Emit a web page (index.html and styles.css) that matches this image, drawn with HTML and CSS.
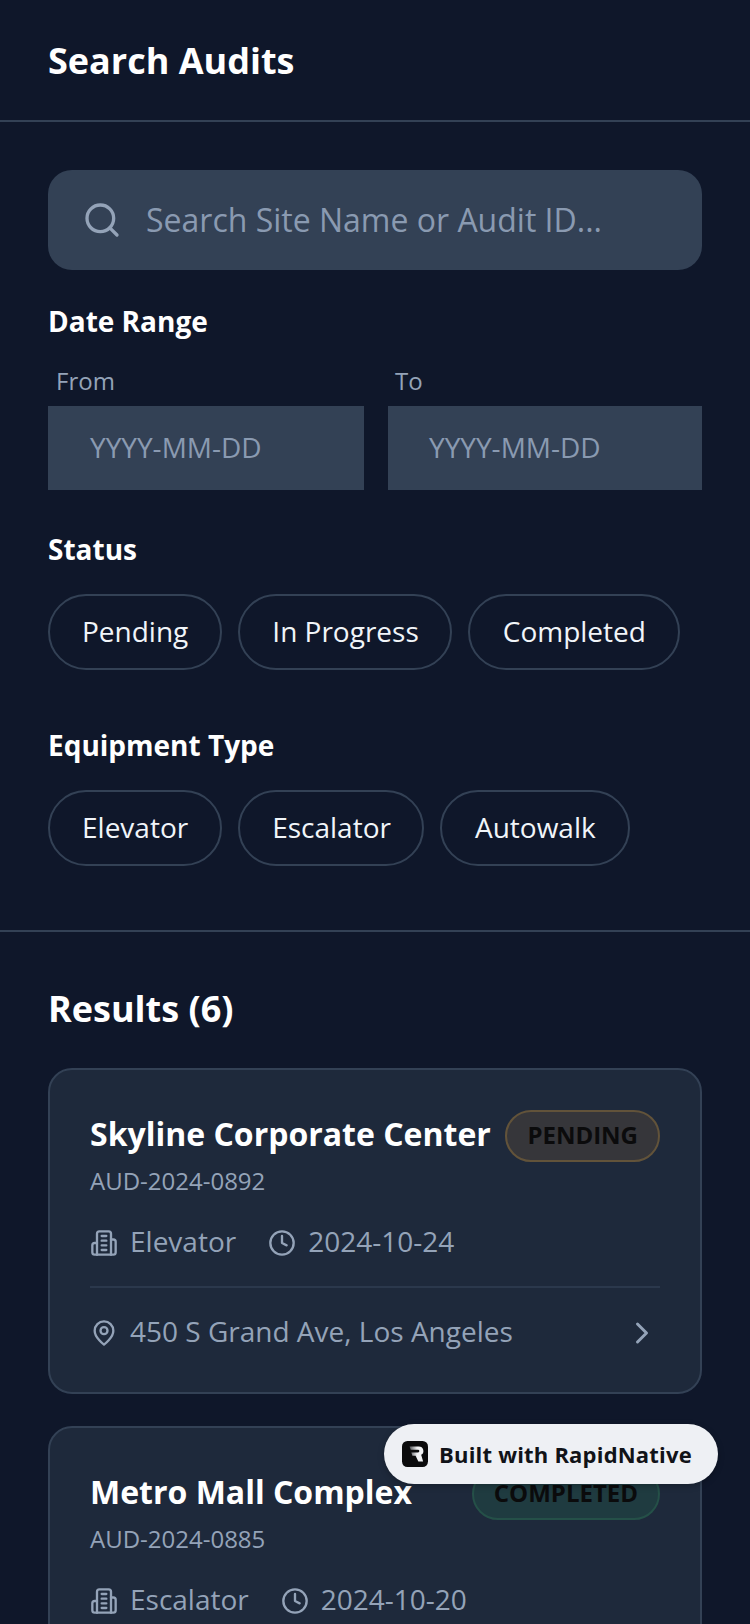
FILE: index.html
```html
<!DOCTYPE html>
<html lang="en">
<head>
  <meta charset="utf-8">
  <title>Search Audits</title>
  <link rel="stylesheet" href="styles.css">
</head>
<body>

<header class="header">
  <h1>Search Audits</h1>
</header>

<section class="filters">
  <div class="searchbox">
    <svg class="search-icon" viewBox="0 0 24 24"><circle cx="11" cy="11" r="8"/><path d="m21 21-4.3-4.3"/></svg>
    <span class="search-text">Search Site Name or Audit ID...</span>
  </div>

  <h3 class="label">Date Range</h3>
  <div class="dates">
    <div class="date from">
      <div class="date-label">From</div>
      <div class="date-input">YYYY-MM-DD</div>
    </div>
    <div class="date to">
      <div class="date-label">To</div>
      <div class="date-input">YYYY-MM-DD</div>
    </div>
  </div>

  <h3 class="label">Status</h3>
  <div class="chips">
    <a class="chip">Pending</a>
    <a class="chip">In Progress</a>
    <a class="chip">Completed</a>
  </div>

  <h3 class="label equipment">Equipment Type</h3>
  <div class="chips">
    <a class="chip">Elevator</a>
    <a class="chip">Escalator</a>
    <a class="chip">Autowalk</a>
  </div>
</section>

<section class="results">
  <h2>Results (6)</h2>

  <div class="card">
    <div class="card-top">
      <div class="card-name">Skyline Corporate Center</div>
      <div class="badge pending">PENDING</div>
    </div>
    <div class="card-id">AUD-2024-0892</div>
    <div class="meta">
      <span class="meta-item">
        <svg class="icon" viewBox="0 0 24 24"><path d="M6 22V4a2 2 0 0 1 2-2h8a2 2 0 0 1 2 2v18Z"/><path d="M6 12H4a2 2 0 0 0-2 2v6a2 2 0 0 0 2 2h2"/><path d="M18 9h2a2 2 0 0 1 2 2v9a2 2 0 0 1-2 2h-2"/><path d="M10 6h4M10 10h4M10 14h4M10 18h4"/></svg>
        Elevator
      </span>
      <span class="meta-item">
        <svg class="icon" viewBox="0 0 24 24"><circle cx="12" cy="12" r="10"/><path d="M12 6v6l4 2"/></svg>
        2024-10-24
      </span>
    </div>
    <div class="card-foot">
      <span class="meta-item">
        <svg class="icon" viewBox="0 0 24 24"><path d="M20 10c0 6-8 12-8 12s-8-6-8-12a8 8 0 0 1 16 0Z"/><circle cx="12" cy="10" r="3"/></svg>
        450 S Grand Ave, Los Angeles
      </span>
      <svg class="chevron" viewBox="0 0 24 24"><path d="m9 18 6-6-6-6"/></svg>
    </div>
  </div>

  <div class="card">
    <div class="card-top">
      <div class="card-name">Metro Mall Complex</div>
      <div class="badge completed">COMPLETED</div>
    </div>
    <div class="card-id">AUD-2024-0885</div>
    <div class="meta">
      <span class="meta-item">
        <svg class="icon" viewBox="0 0 24 24"><path d="M6 22V4a2 2 0 0 1 2-2h8a2 2 0 0 1 2 2v18Z"/><path d="M6 12H4a2 2 0 0 0-2 2v6a2 2 0 0 0 2 2h2"/><path d="M18 9h2a2 2 0 0 1 2 2v9a2 2 0 0 1-2 2h-2"/><path d="M10 6h4M10 10h4M10 14h4M10 18h4"/></svg>
        Escalator
      </span>
      <span class="meta-item">
        <svg class="icon" viewBox="0 0 24 24"><circle cx="12" cy="12" r="10"/><path d="M12 6v6l4 2"/></svg>
        2024-10-20
      </span>
    </div>
  </div>
</section>

<a class="built">
  <svg class="built-logo" viewBox="0 0 24 24">
    <defs>
      <linearGradient id="rfade" x1="0" x2="1" y1="0" y2="0">
        <stop offset="0" stop-color="#55565a"/>
        <stop offset="0.55" stop-color="#f1f2f4"/>
      </linearGradient>
    </defs>
    <rect width="24" height="24" rx="5" fill="#0b0b0c"/>
    <path d="M7 5h8.5a4.2 4.2 0 0 1 2.2 7.8L19.5 19h-4.4l-2.6-5.4H9.6L8.6 10.5h6.2a1.2 1.2 0 0 0 0-2.4H8z" fill="url(#rfade)"/>
  </svg>
  Built with RapidNative
</a>

</body>
</html>
```

FILE: styles.css
```css
html, body {
  margin: 0;
  height: 1624px;
  overflow: hidden;
}

body {
  position: relative;
  background: #0f172a;
  color: #fff;
  font-family: "Open Sans", sans-serif;
}

h1, h2, h3 {
  margin: 0;
}

.header {
  height: 118px;
  padding: 2px 48px 0;
  display: flex;
  align-items: center;
  border-bottom: 2px solid #334155;
}

.header h1 {
  font-size: 36px;
  line-height: 48px;
  font-weight: 700;
}

.filters {
  padding: 48px 48px 64px;
  border-bottom: 2px solid #334155;
}

.searchbox {
  height: 100px;
  padding: 0 34px;
  display: flex;
  align-items: center;
  gap: 24px;
  background: #334155;
  border-radius: 24px;
  color: #8a9ab1;
  font-size: 32px;
}

.search-text {
  margin-bottom: 1px;
}

.search-icon {
  width: 40px;
  height: 40px;
  fill: none;
  stroke: #94a3b8;
  stroke-width: 2;
  stroke-linecap: round;
}

.label {
  margin-top: 32px;
  font-size: 28px;
  line-height: 38px;
  font-weight: 700;
}

.dates {
  display: flex;
  gap: 24px;
  margin-top: 26px;
  margin-bottom: 40px;
}

.date.from {
  width: 316px;
}

.date.to {
  flex: 1;
}

.date-label {
  padding-left: 8px;
  margin-bottom: 10px;
  font-size: 24px;
  line-height: 30px;
  color: #94a3b8;
}

.date-input {
  height: 84px;
  line-height: 82px;
  padding-left: 42px;
  background: #334155;
  color: #8a9ab1;
  font-size: 28px;
}

.date.to .date-label {
  padding-left: 7px;
}

.date.to .date-input {
  padding-left: 41px;
}

.chips {
  display: flex;
  gap: 16px;
  margin-top: 26px;
}

.chip {
  height: 70px;
  padding: 0 32px 2px;
  display: flex;
  align-items: center;
  border: 2px solid #334155;
  border-radius: 38px;
  font-size: 28px;
  color: #f1f5f9;
}

/* middle chip is a px tighter on the right, last one makes up for it */
.chip:nth-child(2) {
  padding-right: 31px;
}

.chip:nth-child(3) {
  padding-left: 33px;
}

.equipment {
  margin-top: 56px;
}

.results {
  padding: 49px 48px 0;
}

.results h2 {
  font-size: 36px;
  line-height: 56px;
  font-weight: 700;
  margin-bottom: 31px;
}

.card {
  padding: 40px 40px 41px;
  margin-bottom: 32px;
  background: #1e293b;
  border: 2px solid #334155;
  border-radius: 24px;
}

.card-top {
  display: flex;
  align-items: flex-start;
  justify-content: space-between;
}

.card-name {
  font-size: 32px;
  line-height: 48px;
  font-weight: 700;
}

.badge {
  height: 48px;
  line-height: 46px;
  padding: 0 20px;
  border-radius: 26px;
  color: #0b0b0c;
  font-size: 24px;
  font-weight: 700;
}

.pending {
  background: #36363a;
  border: 2px solid #62533a;
}

.completed {
  background: #1f3b40;
  border: 2px solid #255048;
}

.card-id {
  margin-top: 3px;
  font-size: 24px;
  line-height: 32px;
  color: #94a3b8;
}

.meta {
  display: flex;
  gap: 32px;
  margin-top: 24px;
}

.meta-item {
  display: flex;
  align-items: center;
  gap: 12px;
  font-size: 28px;
  line-height: 40px;
  color: #94a3b8;
}

.icon {
  width: 28px;
  height: 28px;
  margin-top: 3px;
  fill: none;
  stroke: #94a3b8;
  stroke-width: 2;
  stroke-linecap: round;
  stroke-linejoin: round;
}

.card-foot {
  display: flex;
  align-items: center;
  justify-content: space-between;
  margin-top: 25px;
  padding-top: 23px;
  border-top: 2px solid #2b384c;
}

.chevron {
  width: 36px;
  height: 36px;
  margin-top: 4px;
  fill: none;
  stroke: #94a3b8;
  stroke-width: 2;
  stroke-linecap: round;
  stroke-linejoin: round;
}

.built {
  position: absolute;
  left: 384px;
  top: 1424px;
  width: 334px;
  height: 60px;
  box-sizing: border-box;
  padding-left: 18px;
  display: flex;
  align-items: center;
  gap: 11px;
  background: #eef0f4;
  border-radius: 30px;
  box-shadow: 0 2px 6px rgba(0, 0, 0, 0.25);
  color: #111318;
  font-size: 22px;
  font-weight: 700;
  letter-spacing: 0.2px;
}

.built-logo {
  width: 26px;
  height: 26px;
}
```
